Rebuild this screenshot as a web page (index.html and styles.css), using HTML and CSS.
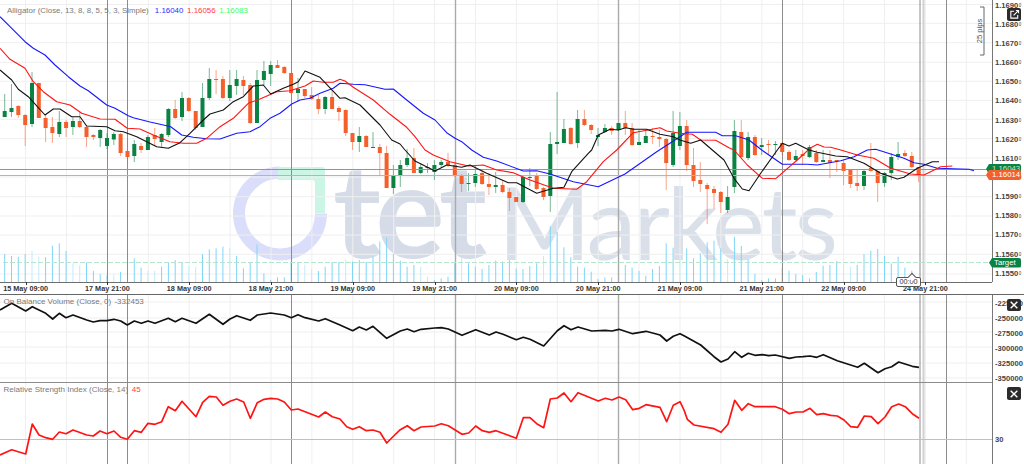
FILE: index.html
```html
<!DOCTYPE html>
<html lang="en">
<head>
<meta charset="utf-8">
<title>Alligator chart</title>
<link rel="stylesheet" href="styles.css">
</head>
<body>
<div class="terminal">
  <section class="pane pane-main">
    <div class="plot">
      <svg class="chart chart-main" id="main-chart" viewBox="0 0 992 282" width="992" height="282">
        <g class="logo">
          <path class="logo-ring" d="M280 172.5A41 41 0 1 0 321 213.5"/>
          <path class="logo-corner" d="M278 167H322Q325 167 325 170V213H315V183Q315 180 312 180H278Z"/>
          <text class="logo-tet" x="333" y="258" textLength="154" lengthAdjust="spacing">tet</text>
          <text class="logo-markets" x="498" y="260" textLength="340" lengthAdjust="spacing">Markets</text>
        </g>
        <g id="main-layer"></g>
        <g class="ruler">
          <path class="ruler-line" d="M980 7H984V55H980"/>
          <text class="ruler-text" transform="translate(981.5 31) rotate(-90)">25 pips</text>
        </g>
      </svg>
      <div class="legend legend-main">Alligator (Close, 13, 8, 8, 5, 5, 3, Simple) <span class="c-blue">1.16040</span> <span class="c-red">1.16056</span> <span class="c-green">1.16083</span></div>
    </div>
    <div class="yaxis price-axis">
      <div class="tick">1.1690<small>0</small></div>
      <div class="tick">1.1680<small>0</small></div>
      <div class="tick">1.1670<small>0</small></div>
      <div class="tick">1.1660<small>0</small></div>
      <div class="tick">1.1650<small>0</small></div>
      <div class="tick">1.1640<small>0</small></div>
      <div class="tick">1.1630<small>0</small></div>
      <div class="tick">1.1620<small>0</small></div>
      <div class="tick">1.1610<small>0</small></div>
      <div class="tick">1.1600<small>0</small></div>
      <div class="tick">1.1590<small>0</small></div>
      <div class="tick">1.1580<small>0</small></div>
      <div class="tick">1.1570<small>0</small></div>
      <div class="tick">1.1560<small>0</small></div>
      <div class="tick">1.1550<small>0</small></div>
    </div>
    <div class="price-tag tag-ask">1.16043</div>
    <div class="price-tag tag-bid">1.16014</div>
    <div class="price-tag tag-target">Target</div>
    <button class="icon-btn btn-main" aria-label="Open">
      <svg viewBox="0 0 12 12" width="11" height="11"><path d="M5.5 2.5H2V10H9.5V6.5M5 7L10 2M7.5 1.6H10.4V4.5" fill="none" stroke="#fff" stroke-width="1.2"/></svg>
    </button>
  </section>

  <div class="time-axis">
    <span>15 May 09:00</span><span>17 May 21:00</span><span>18 May 09:00</span><span>18 May 21:00</span>
    <span>19 May 09:00</span><span>19 May 21:00</span><span>20 May 09:00</span><span>20 May 21:00</span>
    <span>21 May 09:00</span><span>21 May 21:00</span><span>22 May 09:00</span><span>24 May 21:00</span>
    <div class="time-bubble">00:00</div>
  </div>

  <section class="pane pane-obv">
    <div class="plot">
      <svg class="chart" id="obv-chart" viewBox="0 295 992 88" width="992" height="88"></svg>
      <div class="legend legend-sub">On Balance Volume (Close, 0) <span class="c-grey">-332453</span></div>
    </div>
    <div class="yaxis obv-axis">
      <div class="tick">-225000</div>
      <div class="tick">-250000</div>
      <div class="tick">-275000</div>
      <div class="tick">-300000</div>
      <div class="tick">-325000</div>
      <div class="tick">-350000</div>
    </div>
    <button class="icon-btn btn-sub" aria-label="Close">
      <svg viewBox="0 0 12 12" width="10" height="10"><path d="M2 2L10 10M10 2L2 10" fill="none" stroke="#fff" stroke-width="1.7"/></svg>
    </button>
  </section>

  <section class="pane pane-rsi">
    <div class="plot">
      <svg class="chart" id="rsi-chart" viewBox="0 383 992 81" width="992" height="81"></svg>
      <div class="legend legend-sub">Relative Strength Index (Close, 14) <span class="c-red">45</span></div>
    </div>
    <div class="yaxis rsi-axis">
      <div class="tick">30</div>
    </div>
    <button class="icon-btn btn-sub" aria-label="Close">
      <svg viewBox="0 0 12 12" width="10" height="10"><path d="M2 2L10 10M10 2L2 10" fill="none" stroke="#fff" stroke-width="1.7"/></svg>
    </button>
  </section>
</div>
<script src="chart.js"></script>
</body>
</html>
```
FILE: styles.css
```css
* { box-sizing: border-box; }
html, body { margin: 0; padding: 0; background: #fff; }
body { width: 1024px; height: 464px; overflow: hidden; font-family: "Liberation Sans", Arial, sans-serif; }

.terminal { display: flex; flex-direction: column; width: 1024px; height: 464px; }
.pane { position: relative; display: flex; flex: none; width: 1024px; }
.pane-main { height: 282px; }
.pane-obv { height: 88px; }
.pane-rsi { height: 81px; }

.plot { position: relative; flex: none; width: 992px; height: 100%; }
.chart { display: block; }
.chart-main { overflow: visible; }

.yaxis { flex: none; width: 32px; border-left: 1px solid #777; color: #444; font-size: 7.6px; font-weight: 700; line-height: 1; overflow: hidden; }
.tick { display: flex; align-items: center; padding-left: 2px; white-space: nowrap; }
.tick small { font-size: 4.5px; margin: 1.5px 0 0 0.5px; font-weight: 400; }
.price-axis .tick { height: 19.15px; }
.price-axis .tick:first-child { margin-top: -4px; }
.obv-axis .tick { height: 15px; }
.obv-axis .tick:first-child { margin-top: 1.5px; }
.rsi-axis .tick { height: 12px; margin-top: 51px; }

.legend { position: absolute; color: #7a7a7a; font-size: 8px; line-height: 10px; white-space: nowrap; }
.legend-main { left: 7px; top: 6px; font-size: 7.9px; }
.legend-sub { left: 3.6px; top: 2px; }
.c-blue { color: #2b2bff; margin-left: 4px; }
.c-red { color: #ff3b3b; margin-left: 1.5px; }
.c-green { color: #3dff5a; margin-left: 1.5px; }
.c-grey { color: #777; margin-left: 1px; }

.logo-ring { fill: none; stroke: #dbdefa; stroke-width: 12; }
.logo-corner { fill: #cbf6e5; }
.logo-tet { font-family: Lato, sans-serif; font-weight: 700; font-size: 130px; fill: #d5dce8; }
.logo-markets { font-family: Lato, sans-serif; font-weight: 400; font-size: 100px; fill: #dae0ea; }

.grid { stroke: #efefef; stroke-width: 1; }
.session { stroke: #8c8c8c; stroke-width: 1; }
.session-soft { stroke: #aaa; stroke-width: 1.4; }
.session-pale { stroke: #d0d0d0; stroke-width: 2; }
.vol { stroke: #7fd6f7; stroke-width: 1; }
.vol-pale { stroke: #c2ebfb; stroke-width: 1; }
.wick { stroke-width: 1; opacity: 0.55; }
.up { fill: #0a8243; stroke: #0a8243; }
.down { fill: #f45f2b; stroke: #f45f2b; }
.body { stroke: none; }
.trace { fill: none; stroke-linejoin: round; stroke-width: 1.1; }
.trace-blue { stroke: #1616ff; }
.trace-red { stroke: #ff1414; }
.trace-black { stroke: #111; }
.trace-thick { stroke-width: 1.7; }
.level-ask { stroke: #69ad8a; stroke-width: 1; }
.level-bid { stroke: #eda288; stroke-width: 1; }
.level-target { stroke: #b5e6cd; stroke-width: 1.2; stroke-dasharray: 5 2; }
.level-30 { stroke: #7dd8f8; stroke-width: 1; }
.ruler-line { fill: none; stroke: #555; stroke-width: 0.9; }
.ruler-text { font-family: "Liberation Sans", Arial, sans-serif; font-size: 7.6px; fill: #555; text-anchor: middle; }

.price-tag { position: absolute; height: 10px; color: #fff; font-size: 7.8px; line-height: 10px; clip-path: polygon(3px 0, 100% 0, 100% 100%, 3px 100%, 0 50%); border-radius: 0 2px 2px 0; }
.tag-ask { left: 986px; top: 164px; width: 35px; padding-left: 6px; background: #0a8243; color: #c3e6d2; }
.tag-bid { left: 986px; top: 170px; width: 35px; padding-left: 6px; background: #f45f2b; }
.tag-target { left: 989px; top: 258px; width: 32px; height: 9.5px; padding-left: 5px; line-height: 9.5px; background: #0a8243; }

.icon-btn { position: absolute; left: 1007px; display: flex; align-items: center; justify-content: center; width: 14px; height: 13px; padding: 0; border: 0; border-radius: 2px; background: #2b2b2b; }
.btn-main { top: 8px; }
.btn-sub { top: 4px; }
.pane-obv .btn-sub { height: 12px; }

.time-axis { position: relative; display: flex; flex: none; width: 1024px; height: 13px; border-bottom: 1.5px solid #666; color: #333; font-size: 7.25px; font-weight: 700; line-height: 14px; }
.time-axis::before { content: ""; position: absolute; left: 0; top: 0; width: 992px; height: 1px; background: #6e6e6e; }
.time-axis span { position: relative; flex: none; width: 81.8px; text-align: center; white-space: nowrap; }
.time-axis span:first-child { margin-left: -15.3px; }
.time-axis span::before { content: ""; position: absolute; left: 50%; top: 0; width: 1px; height: 3px; background: #333; }
.time-bubble { position: absolute; left: 896px; top: -5px; width: 25px; height: 9.5px; border: 1px solid #555; border-radius: 2px; background: #fff; color: #333; font-size: 7.25px; font-weight: 400; line-height: 8.5px; text-align: center; }
.time-bubble::before { content: ""; position: absolute; left: 12px; top: -4px; width: 5px; height: 5px; background: #fff; border-left: 1px solid #555; border-top: 1px solid #555; transform: rotate(45deg); }
```
FILE: chart.js
```js
// Chart data is measured from crops at 3x; each crop has an origin in page pixels.
var CROPS = {
  A: [0, 0], B: [340, 0], C: [684, 0],
  D: [0, 150], E: [340, 150], F: [684, 150],
  G: [0, 295], H: [340, 295], I: [684, 295]
};

function trace(parts) {
  var out = [];
  parts.forEach(function (part) {
    var o = CROPS[part[0]], n = part[1];
    for (var i = 0; i < n.length; i += 2) {
      out.push((o[0] + n[i] / 3).toFixed(1) + ',' + (o[1] + n[i + 1] / 3).toFixed(1));
    }
  });
  return out.join(' ');
}

var BLUE = trace([
  ['A', [0,50,30,80,75,125,100,145,135,165,165,195,205,230,240,258,265,272,320,315,345,325,385,347,400,353,450,366,500,377,512,380,545,405,580,412,620,416,660,417,710,400,750,395,780,380,810,355,840,340,875,312,900,300,930,295,960,280,1000,265,1020,250]],
  ['B', [40,253,75,254,135,268,160,267,200,300,250,340,285,360,320,398,345,415,365,425,395,450]],
  ['E', [430,22,470,33,550,63,590,62,630,72,700,95,775,110,855,72,950,5]],
  ['B', [1020,410]],
  ['C', [8,397,95,397,115,407,155,407,195,420,233,450]],
  ['F', [295,43,370,43,400,45,470,32,510,20,550,0,575,-2,620,12,660,25,690,38,720,43,760,55,855,58,870,62]]
]);
var RED = trace([
  ['A', [0,145,30,178,75,205,100,245,130,275,170,305,210,315,245,340,300,357,345,358,382,385,420,387,460,405,510,425,550,430,590,430,620,415,660,380,700,355,745,310,780,297,830,275,870,272,915,258,940,243,970,247,1000,247,1020,238]],
  ['B', [15,243,40,262,100,300,150,343,200,382,225,410,255,450]],
  ['E', [280,15,330,35,385,48,430,45,470,60,520,68,570,90,640,115,710,118,740,95,790,35,830,0]],
  ['B', [880,398,960,383,980,393,1020,400]],
  ['C', [25,403,50,420,95,421,135,443,150,450]],
  ['F', [190,45,235,85,275,86,340,30,378,-5]],
  ['C', [400,433,420,441,440,442,470,450]],
  ['F', [520,15,570,25,620,55,680,72,720,75,770,50,805,48]]
]);
var BLACK = trace([
  ['A', [0,210,35,240,55,268,85,290,135,345,160,327,180,327,215,350,240,350,260,378,320,380,345,392,370,395,410,410,470,440,505,445,540,428,570,400,610,360,630,342,670,330,700,305,730,290,760,258,790,255,812,282,850,265,880,253,895,245,915,213,960,232,1020,295]],
  ['B', [15,293,60,315,120,375,155,420,180,432,195,450]],
  ['E', [225,33,285,63,320,45,365,52,390,45,440,70,505,98,530,98,590,130,640,115,672,112,695,65,745,10,755,0]],
  ['B', [775,405,810,388,835,390,857,383,880,388,920,388,960,403,1000,410,1020,420]],
  ['C', [20,430,50,420,85,450]],
  ['F', [120,30,150,85,175,117,195,122,230,70,280,0]],
  ['C', [295,430,315,438,335,430,375,450]],
  ['F', [400,7,455,18,490,20,540,40,590,70,640,87,660,82,700,55,745,35,765,35]]
]);
var OBV = trace([
  ['G', [0,45,35,25,77,48,97,35,137,55,158,72,178,55,198,68,219,60,260,75,280,81,300,77,321,77,342,73,362,78,382,90,403,78,424,85,444,78,465,85,505,70,526,80,546,70,588,85,628,58,669,88,690,72,710,62,751,76,772,60,812,54,853,60,874,68,894,59,915,68,956,78,976,71,1020,90]],
  ['H', [38,107,58,96,79,105,99,94,140,130,181,108,202,102,222,110,243,103,284,99,304,98,325,102,366,121,407,104,448,120,468,111,489,118,529,134,550,127,570,133,611,153,652,107,672,92,693,104,714,96,755,108,796,106,816,108,837,103,878,116,918,109,960,120,980,138,1000,124,1020,116]],
  ['I', [0,122,50,150,90,185,111,201,132,192,152,170,173,187,193,175,213,181,235,179,254,182,274,180,316,190,337,186,357,185,378,183,398,187,418,179,460,197,521,217,541,205,582,233,603,221,623,215,644,201,685,214,705,217]]
]);
var RSI = trace([
  ['G', [0,480,35,464,77,477,97,387,117,420,137,428,158,433,178,411,198,416,219,405,260,420,280,423,300,408,321,416,342,408,362,427,382,433,403,407,424,412,444,385,465,388,485,380,505,335,526,347,546,319,588,365,608,322,628,304,649,306,669,331,690,319,710,312,731,321,751,370,772,323,792,313,812,310,833,312,853,321,874,345,894,342,956,366,976,351,997,365,1020,372]],
  ['H', [20,395,38,403,58,395,79,407,99,405,120,412,140,444,161,423,181,404,202,392,222,407,243,396,284,393,304,386,325,392,366,418,386,414,407,393,427,407,448,412,468,407,529,430,550,368,570,368,590,386,611,398,631,312,652,309,672,294,693,320,714,293,775,318,796,310,816,315,837,306,857,314,878,344,898,340,918,329,960,337,980,380,1000,331,1020,320]],
  ['I', [0,345,10,373,30,390,90,401,111,412,132,388,152,316,173,346,193,326,213,335,274,335,295,343,316,356,337,351,357,351,378,340,398,359,418,356,440,361,460,363,480,375,500,395,521,397,541,363,562,365,582,386,603,366,623,335,644,327,664,335,685,356,705,370]]
]);

// One candle per bar: colour, body top, body bottom, wick top, wick bottom (page y).
var CANDLES = [
  ['g',111,117,94,117],['g',108,112,84,117],['r',106,115,105,118],['r',115,125,114,146],['g',83,124,72,127],
  ['r',83,118,83,118],['r',118,128,115,142],['r',127,133,117,143],['g',122,134,111,137],['r',122,128,120,137],
  ['g',121,127,117,135],['r',121,127,111,128],['r',127,137,125,147],['r',135,137,134,140],['g',130,138,129,147],
  ['g',138,146,133,149],['g',134,139.5,132,145],['r',134,153,133,156],['r',151,157,140,163],['g',144,156,140,162],
  ['r',146,150,143,153],['g',137,150,135,150],['r',135,139,128,146],['g',134,142,133,147],['g',109,135,108,137],
  ['r',109,118,100,119],['g',98,117,92,121],['r',98,111,97,112],['r',111,128,111,130],['g',98,127,83,127],
  ['g',79,98,68,100],['r',79,80,70,94],['r',79,98,76,99],['g',85,98,70,101],['g',79,86,70,95],
  ['r',80,86,76,95],['r',85,123,83,124],['g',80,123,70,123],['g',71,80,61,85],['g',65,74,61,86],
  ['r',65,68,60,68],['r',67,73,66,74],['r',73,93,73,94],['g',89,93,78,102],['r',89,96,89,98],
  ['r',95,99,87,100],['r',99,109,95,114],['g',97,109,96,114],['r',97,109,90,109],['r',108,112,106,121],
  ['r',110,133,109,136],['r',133,142,133,150],['g',136,142,127,152],['r',136,147,135,147],['g',147,148,132,148],
  ['r',147,153,144,175],['r',153,188,146,188],['g',175,188,165,194],['g',165,175,160,187],['g',158,165,149,167],
  ['r',158,173,148,173],['g',167,173,163,174],['g',167,168,163,173],['g',165,172,160,180],['g',162,165,160,167],
  ['r',162,165,153,167],['r',165,176,163,177],['r',176,184,174,192],['g',183,184,173,191],['g',174,183,165,187],
  ['r',173,184,170,185],['r',184,187,173,195],['g',185,187,172,193],['r',185,192,180,193],['r',192,198,188,211],
  ['r',197,202,197,202],['g',177,202,176,203],['g',177,178,168,186],['r',176,189,173,190],['r',188,197,187,200],
  ['g',144,196,132,212],['g',142,144,92,154],['g',129,143,119,143],['r',128,144,127,145],['g',119,143,110,148],
  ['r',119,125,110,126],['r',125,130,124,134],['g',135,137,128,146],['g',128,132,124,133],['r',128,131,126,135],
  ['g',123,130,123,131],['r',123,128,111,135],['r',128,145,123,146],['g',142,145,130,145],['g',136,143,130,143],
  ['r',136,137,128,144],['r',137,139,130,147],['r',139,163,138,190],['g',133,165,111,167],['g',126,146,112,150],
  ['r',126,165,120,171],['r',165,181,148,187],['r',180,184,162,192],['r',185,189,183,224],['r',189,193,186,209],
  ['r',192,202,191,213],['g',197,210,186,213],['g',131,187,120,193],['r',132,157,120,158],['g',137,158,132,160],
  ['r',137,155,135,156],['g',145,147,138,155],['r',144,145,140,155],['g',144,145,141,155],['r',143,152,142,155],
  ['r',152,160,150,161],['g',156,160,150,162],['r',154,156,150,165],['g',147,157,145,158],['r',153,162,150,163],
  ['g',160,162,150,162],['r',160,163,150,178],['r',160,161,160,172],['r',163,171,160,185],['r',170,184,169,188],
  ['r',183,186,169,191],['g',171,186,170,190],['r',168,171,143,172],['r',171,183,170,202],['g',173,183,172,187],
  ['g',157,173,153,180],['g',154,157,142,160],['r',153,156,150,157],['r',156,167,152,168],['r',167,175,167,182]
];

// Top of each volume bar, in crop units of crop D (bars end on the axis at y = 282).
var VOLUME = [312,318,320,312,303,320,322,287,280,303,340,346,338,363,372,376,374,366,327,325,353,363,362,350,338,330,336,348,350,312,298,295,290,294,318,355,336,283,370,390,382,382,335,338,344,358,363,350,336,336,
  328,335,330,336,320,275,263,312,332,350,345,350,380,390,385,380,340,323,340,350,357,345,332,335,330,355,357,348,340,318,228,246,292,322,350,353,365,387,382,382,350,345,353,363,377,357,348,280,293,320,
  295,325,310,277,272,295,328,260,288,327,372,390,385,385,355,362,372,375,385,366,347,345,333,343,350,345,312,302,297,318,340,320,353,362];
var PALE_BARS = [4,5,10,11,16,18,21,22,27,28,33,44,45,50,61,62,67,79,90,99,106,123,124];

var PRICE_LINES = [4.5,23.3,42.7,62.3,81.3,100.3,119.3,138.7,158,177,196.7,216,235,254.3,274];
var OBV_LINES = [302,318,332,347,363,378];
var SESSIONS = [[107.5,'session'],[127.5,'session'],[291.5,'session'],[455.5,'session-soft'],[618.5,'session-soft'],[782.5,'session'],[923.5,'session-pale'],[920,'session'],[946.5,'session']];

var STEP = 6.82, FIRST = 4.7;

function line(x1, y1, x2, y2, cls) {
  return '<line class="' + cls + '" x1="' + x1 + '" y1="' + y1 + '" x2="' + x2 + '" y2="' + y2 + '"/>';
}
function poly(points, cls) {
  return '<polyline class="trace ' + cls + '" points="' + points + '"/>';
}
function frame(top, bottom, levels) {
  var html = '';
  levels.forEach(function (y) { html += line(0, y, 992, y, 'grid'); });
  for (var x = 25.6; x < 992; x += 40.9) html += line(x.toFixed(1), top, x.toFixed(1), bottom, 'grid');
  return html;
}
function sessions(top, bottom) {
  return SESSIONS.map(function (s) { return line(s[0], top, s[0], bottom, s[1]); }).join('');
}

var paleBars = {};
PALE_BARS.forEach(function (i) { paleBars[i] = true; });

var main = frame(0, 282, PRICE_LINES);
VOLUME.forEach(function (z, i) {
  var x = (FIRST + STEP * i).toFixed(1);
  main += line(x, (150 + z / 3).toFixed(1), x, 282, paleBars[i] ? 'vol-pale' : 'vol');
});
main += sessions(0, 282);
main += line(3, 262.5, 992, 262.5, 'level-target');
CANDLES.forEach(function (c, i) {
  var x = FIRST + STEP * i, cls = c[0] === 'g' ? 'up' : 'down';
  main += line(x.toFixed(1), c[3], x.toFixed(1), c[4], 'wick ' + cls);
  main += '<rect class="body ' + cls + '" x="' + (x - 2).toFixed(1) + '" y="' + c[1] + '" width="4" height="' + Math.max(c[2] - c[1], 1) + '"/>';
});
main += line(0, 169.5, 992, 169.5, 'level-ask') + line(0, 175.5, 992, 175.5, 'level-bid');
main += poly(BLUE, 'trace-blue') + poly(RED, 'trace-red') + poly(BLACK, 'trace-black');
document.getElementById('main-layer').innerHTML = main;

document.getElementById('obv-chart').innerHTML =
  frame(295, 383, OBV_LINES) + sessions(295, 383) + poly(OBV, 'trace-black trace-thick') +
  line(0, 382.5, 992, 382.5, 'session');

document.getElementById('rsi-chart').innerHTML =
  frame(383, 464, []) + sessions(383, 464) + line(0, 439.5, 992, 439.5, 'level-30') +
  poly(RSI, 'trace-red trace-thick');
```
